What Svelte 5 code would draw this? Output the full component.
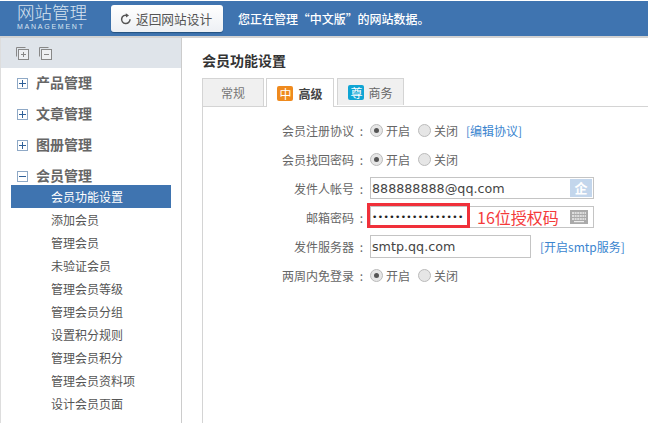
<script lang="ts">
	const groups = ['产品管理', '文章管理', '图册管理']
	const members = [
		'会员功能设置',
		'添加会员',
		'管理会员',
		'未验证会员',
		'管理会员等级',
		'管理会员分组',
		'设置积分规则',
		'管理会员积分',
		'管理会员资料项',
		'设计会员页面',
	]
	const dots = '••••••••••••••••'
</script>

{#snippet radios()}
	<span class="radio on"></span><span class="opt">开启</span>
	<span class="radio"></span><span class="opt">关闭</span>
{/snippet}

<div class="page">
	<header class="top">
		<div class="logo">
			<div class="logo-cn">网站管理</div>
			<div class="logo-en">MANAGEMENT</div>
		</div>
		<button class="back">
			<svg width="12" height="12" viewBox="0 0 12 12" fill="none">
				<path d="M7.2 2.4A4.2 4.2 0 1 0 10 6.2" stroke="#555" stroke-width="1.5" />
				<path d="M5.8 0.2 9 2.5 6 4.6Z" fill="#555" />
			</svg>
			返回网站设计
		</button>
		<p class="notice">您正在管理 “中文版” 的网站数据。</p>
	</header>

	<div class="body">
		<aside class="side">
			<div class="side-tools">
				<svg width="13" height="13" viewBox="0 0 13 13" fill="none" stroke="#888">
					<path d="M9.5 .5H.5V9.5" />
					<rect x="2.5" y="2.5" width="10" height="10" fill="#eef0f3" />
					<path d="M5 7.5h5M7.5 5v5" />
				</svg>
				<svg width="13" height="13" viewBox="0 0 13 13" fill="none" stroke="#888">
					<path d="M9.5 .5H.5V9.5" />
					<rect x="2.5" y="2.5" width="10" height="10" fill="#eef0f3" />
					<path d="M5 7.5h5" />
				</svg>
			</div>
			{#each groups as g}
				<div class="group">
					<span class="box"><i class="h"></i><i class="v"></i></span><span class="gname">{g}</span>
				</div>
			{/each}
			<div class="group">
				<span class="box"><i class="h"></i></span><span class="gname">会员管理</span>
			</div>
			<ul class="sub">
				{#each members as m, i}
					<li class:active={i === 0}>{m}</li>
				{/each}
			</ul>
		</aside>

		<main class="main">
			<h1>会员功能设置</h1>
			<div class="tabs">
				<div class="tab plain">常规</div>
				<div class="tab current"><span class="badge orange">中</span>高级</div>
				<div class="tab plain biz"><span class="badge cyan">尊</span>商务</div>
			</div>
			<div class="panel">
				<div class="row">
					<label>会员注册协议 :</label>
					{@render radios()}
					<a href="#top" class="link first">[编辑协议]</a>
				</div>
				<div class="row">
					<label>会员找回密码 :</label>
					{@render radios()}
				</div>
				<div class="row">
					<label>发件人帐号 :</label>
					<div class="field wide">
						<span>888888888@qq.com</span>
						<span class="qi">企</span>
					</div>
				</div>
				<div class="row">
					<label>邮箱密码 :</label>
					<div class="field wide pw">
						<span class="dots">{dots}</span>
						<span class="hint">16位授权码</span>
						<svg class="kb" width="18" height="14" viewBox="0 0 18 14">
							<rect width="18" height="14" fill="#aaa" />
							<path d="M2 3h14M2 6h14M2 9h14" stroke="#eee" stroke-width="1.4" stroke-dasharray="2 .6" />
							<path d="M4 11.6h10" stroke="#eee" stroke-width="1.2" />
						</svg>
						<span class="redbox"></span>
					</div>
				</div>
				<div class="row">
					<label>发件服务器 :</label>
					<div class="field short"><span>smtp.qq.com</span></div>
					<a href="#top" class="link">[开启smtp服务]</a>
				</div>
				<div class="row">
					<label>两周内免登录 :</label>
					{@render radios()}
				</div>
			</div>
		</main>
	</div>
</div>

<style>
	:global(body) {
		margin: 0;
		background: #fff;
		overflow: hidden;
	}

	.page {
		width: 648px;
		height: 423px;
		overflow: hidden;
		font-family: "Noto Sans CJK SC", "Liberation Sans", sans-serif;
		color: #555;
		font-size: 12px;
	}

	.top {
		height: 35px;
		border-top: 1px solid #fff;
		border-bottom: 2px solid #d2d2d2;
		background: #3f74b0;
		display: flex;
		align-items: center;
		color: #fff;
	}

	.logo {
		width: 111px;
		padding: 0 0 3px 17px;
		box-sizing: border-box;
		color: #d9e4f1;
	}

	.logo-cn {
		font-size: 17.5px;
		font-weight: 300;
		line-height: 16px;
	}

	.logo-en {
		font-family: "Liberation Sans", sans-serif;
		font-size: 7px;
		line-height: 7px;
		letter-spacing: 1.75px;
		margin-top: 3px;
		white-space: nowrap;
	}

	.back {
		width: 112px;
		height: 27px;
		padding: 0 0 0 9px;
		border: 0;
		border-radius: 3px;
		background: linear-gradient(#fff, #edf0f4);
		box-shadow: 0 1px 1px #24517f;
		color: #555;
		font: inherit;
		font-size: 12.7px;
		display: flex;
		align-items: center;
		gap: 4px;
		white-space: nowrap;
	}

	.notice {
		margin: 0 0 0 15px;
		font-size: 12px;
		font-weight: 500;
		word-spacing: -3px;
		white-space: nowrap;
	}

	.body {
		display: flex;
		height: 385px;
	}

	.side {
		width: 182px;
		flex: none;
		box-sizing: border-box;
		border-left: 1px solid #ddd;
		border-right: 1px solid #ccc;
	}

	.side-tools {
		height: 30px;
		background: #dfe4ea;
		display: flex;
		align-items: center;
		gap: 10px;
		padding-left: 15px;
		box-sizing: border-box;
	}

	.group {
		height: 31px;
		display: flex;
		align-items: center;
		padding-left: 16px;
		font-size: 14px;
		font-weight: 700;
		color: #666;
	}

	.gname {
		line-height: 18px;
		margin-top: -3px;
	}

	.box {
		width: 9px;
		height: 9px;
		border: 1px solid #8fa9c6;
		margin: -1px 8px 0 0;
		position: relative;
		background: #fff;
	}

	.box i {
		position: absolute;
		background: #2f6099;
	}

	.box .h {
		left: 1px;
		right: 1px;
		top: 4px;
		height: 1px;
	}

	.box .v {
		top: 1px;
		bottom: 1px;
		left: 4px;
		width: 1px;
	}

	.sub {
		list-style: none;
		margin: -7px 0 0 10px;
		padding: 0;
		width: 160px;
	}

	.sub li {
		height: 23px;
		line-height: 23px;
		padding-left: 40px;
		color: #555;
	}

	.sub li.active {
		background: #3f74b0;
		color: #fff;
	}

	.main {
		flex: 1;
		padding: 0 0 0 20px;
		min-width: 0;
	}

	h1 {
		margin: 13px 0 0;
		font-size: 14px;
		line-height: 18px;
		font-weight: 700;
		color: #333;
	}

	.tabs {
		display: flex;
		margin-top: 9px;
		height: 28px;
		gap: 2px;
		position: relative;
	}

	.tab {
		box-sizing: border-box;
		display: flex;
		align-items: center;
		justify-content: center;
		border: 1px solid #d4d4d4;
		border-bottom: 0;
		height: 28px;
	}

	.plain {
		width: 62px;
		background: #f0f0f0;
		color: #777;
	}

	.biz {
		width: 67px;
		margin-left: 1px;
		height: 27px;
		color: #666;
		gap: 4px;
	}

	.current {
		width: 68px;
		background: #fff;
		color: #444;
		font-weight: 700;
		gap: 5px;
		height: 29px;
		z-index: 1;
	}

	.badge {
		width: 16px;
		height: 15px;
		border-radius: 2px;
		color: #fff;
		font-size: 12px;
		line-height: 15px;
		text-align: center;
		font-weight: 400;
	}

	.orange {
		background: #ef8a1d;
	}

	.cyan {
		background: #0fa5d4;
	}

	.panel {
		border-top: 1px solid #d4d4d4;
		border-left: 1px solid #d4d4d4;
		height: 320px;
		padding-top: 8.5px;
		box-sizing: border-box;
	}

	.row {
		height: 29px;
		display: flex;
		align-items: center;
		color: #666;
	}

	label {
		width: 160px;
		margin-right: 7px;
		text-align: right;
		flex: none;
		white-space: nowrap;
		word-spacing: 3px;
	}

	.radio {
		width: 11px;
		height: 11px;
		border-radius: 50%;
		border: 1px solid #bbb;
		background: #e6e6e6;
		flex: none;
		position: relative;
	}

	.radio.on::after {
		content: '';
		position: absolute;
		inset: 3px;
		border-radius: 50%;
		background: #555;
	}

	.opt {
		margin: 0 8px 0 3px;
	}

	.link {
		color: #3a85cf;
		text-decoration: none;
		white-space: nowrap;
	}

	.field {
		height: 22px;
		box-sizing: border-box;
		border: 1px solid #c4c4c4;
		display: flex;
		align-items: center;
		padding-left: 1px;
		font-family: "DejaVu Sans", "Noto Sans CJK SC", sans-serif;
		font-size: 12.7px;
		color: #444;
		position: relative;
	}

	.wide {
		width: 224px;
	}

	.short {
		width: 161px;
		margin-right: 9px;
		height: 23px;
	}

	.qi {
		margin-left: auto;
		margin-right: 1px;
		width: 22px;
		height: 18px;
		background: #c3d6ec;
		color: #fff;
		font-family: "Noto Sans CJK SC", sans-serif;
		font-weight: 700;
		font-size: 13px;
		line-height: 18px;
		text-align: center;
	}

	.dots {
		font-size: 9px;
		letter-spacing: 0.42px;
		width: 98px;
		overflow: hidden;
		white-space: nowrap;
		color: #222;
	}

	.hint {
		margin-left: 7px;
		font-family: "Noto Sans CJK SC", sans-serif;
		font-size: 16px;
		color: #f43a3a;
		white-space: nowrap;
	}

	.kb {
		margin-left: auto;
		margin-right: 5px;
	}

	.redbox {
		position: absolute;
		left: -4px;
		top: -4px;
		width: 103px;
		height: 25px;
		box-sizing: border-box;
		border: 3px solid #f0303a;
	}
</style>
